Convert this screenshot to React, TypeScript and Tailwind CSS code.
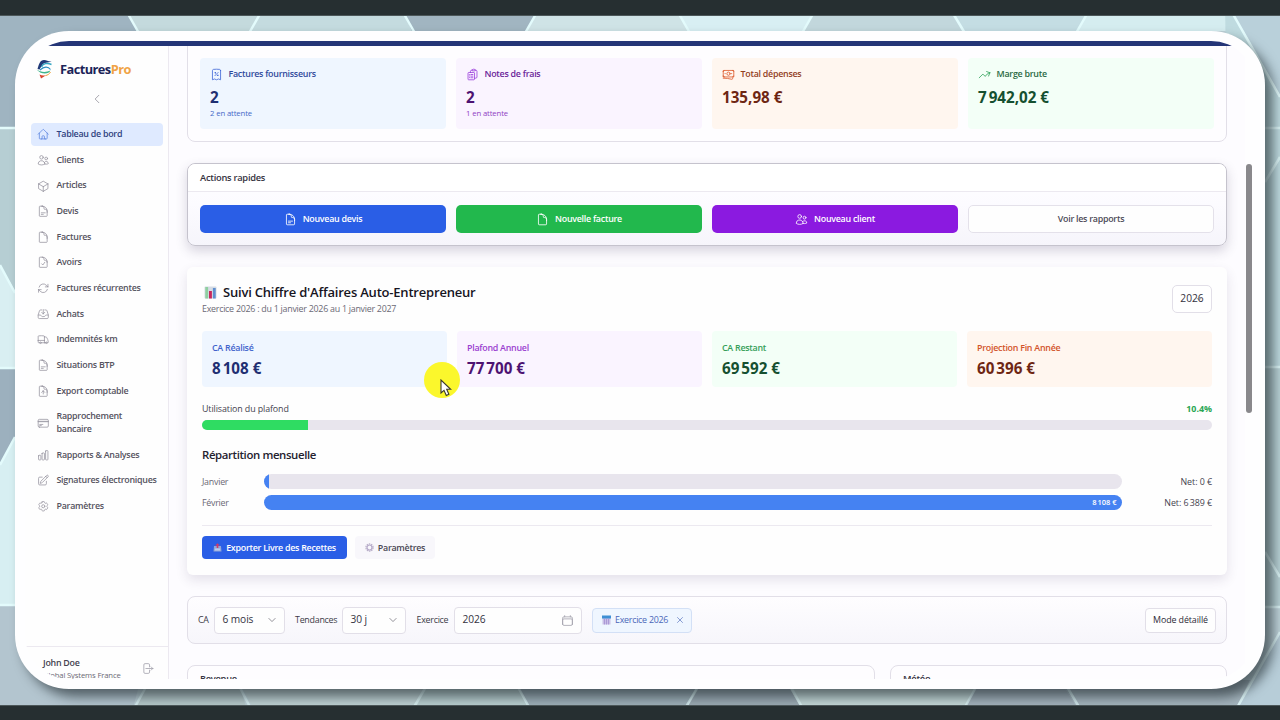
import type { ReactNode } from 'react';
import type { IconType } from 'react-icons';
import {
  HiOutlineArrowPath,
  HiOutlineArrowRightOnRectangle,
  HiOutlineArrowTrendingUp,
  HiOutlineBanknotes,
  HiOutlineCalendar,
  HiOutlineChartBar,
  HiOutlineChevronDown,
  HiOutlineChevronLeft,
  HiOutlineClipboardDocumentList,
  HiOutlineCog6Tooth,
  HiOutlineCreditCard,
  HiOutlineCube,
  HiOutlineDocument,
  HiOutlineDocumentArrowUp,
  HiOutlineDocumentCheck,
  HiOutlineDocumentText,
  HiOutlineHome,
  HiOutlineInboxArrowDown,
  HiOutlinePencilSquare,
  HiOutlineReceiptPercent,
  HiOutlineTruck,
  HiOutlineUsers,
  HiOutlineXMark,
} from 'react-icons/hi2';

const navItems: { label: string; icon: IconType; active?: boolean }[] = [
  { label: 'Tableau de bord', icon: HiOutlineHome, active: true },
  { label: 'Clients', icon: HiOutlineUsers },
  { label: 'Articles', icon: HiOutlineCube },
  { label: 'Devis', icon: HiOutlineDocumentText },
  { label: 'Factures', icon: HiOutlineDocument },
  { label: 'Avoirs', icon: HiOutlineDocumentCheck },
  { label: 'Factures récurrentes', icon: HiOutlineArrowPath },
  { label: 'Achats', icon: HiOutlineInboxArrowDown },
  { label: 'Indemnités km', icon: HiOutlineTruck },
  { label: 'Situations BTP', icon: HiOutlineDocumentText },
  { label: 'Export comptable', icon: HiOutlineDocumentArrowUp },
  { label: 'Rapprochement bancaire', icon: HiOutlineCreditCard },
  { label: 'Rapports & Analyses', icon: HiOutlineChartBar },
  { label: 'Signatures électroniques', icon: HiOutlinePencilSquare },
  { label: 'Paramètres', icon: HiOutlineCog6Tooth },
];

// Amounts use a narrow no-break space as thousands separator
const expenseTiles = [
  { label: 'Factures fournisseurs', value: '2', note: '2 en attente', icon: HiOutlineReceiptPercent, bg: 'bg-[#eff6ff]', iconColor: 'text-[#3f68d8]', title: 'text-[#2f4a9c]', number: 'text-[#1f2f72]', noteColor: 'text-[#4468c8]' },
  { label: 'Notes de frais', value: '2', note: '1 en attente', icon: HiOutlineClipboardDocumentList, bg: 'bg-[#faf4ff]', iconColor: 'text-[#9b3fdc]', title: 'text-[#6b2699]', number: 'text-[#4d1272]', noteColor: 'text-[#9042c4]' },
  { label: 'Total dépenses', value: '135,98 €', note: '', icon: HiOutlineBanknotes, bg: 'bg-[#fff6ef]', iconColor: 'text-[#dd5a2c]', title: 'text-[#93411f]', number: 'text-[#6e2613]', noteColor: '' },
  { label: 'Marge brute', value: '7\u202f942,02 €', note: '', icon: HiOutlineArrowTrendingUp, bg: 'bg-[#f3fff7]', iconColor: 'text-[#2fa35a]', title: 'text-[#2a6a44]', number: 'text-[#155030]', noteColor: '' },
];

const revenueTiles = [
  { label: 'CA Réalisé', value: '8\u202f108 €', bg: 'bg-[#eff6ff]', title: 'text-[#3f63cc]', number: 'text-[#1f2f72]' },
  { label: 'Plafond Annuel', value: '77\u202f700 €', bg: 'bg-[#faf4ff]', title: 'text-[#9a3fd0]', number: 'text-[#4d1272]' },
  { label: 'CA Restant', value: '69\u202f592 €', bg: 'bg-[#f3fff7]', title: 'text-[#35a05a]', number: 'text-[#155030]' },
  { label: 'Projection Fin Année', value: '60\u202f396 €', bg: 'bg-[#fff6ef]', title: 'text-[#d2542a]', number: 'text-[#6e2613]' },
];

function Backdrop() {
  return (
    <svg className="absolute inset-0" width="1280" height="720" viewBox="0 0 1280 720">
      <rect width="1280" height="720" fill="#bfd3da" />
      <path d="M0 0H120L138 31L60 128H0Z" fill="#9fb4c1" />
      <path d="M120 0L138 31H250L268 0Z" fill="#c4dadd" />
      <path d="M0 128H60V293H15L0 265Z" fill="#b6ced3" />
      <path d="M0 265L60 368H0Z" fill="#d9eff2" />
      <path d="M0 368H60V437H15L0 465Z" fill="#9cb0be" />
      <path d="M0 465L15 437H60V605H0Z" fill="#d7eff2" />
      <path d="M0 605H160L130 720H0Z" fill="#b3c5cf" />
      <path d="M268 0L250 31H412L398 0Z" fill="#c4dbdf" />
      <path d="M398 0L412 31H526L543 0Z" fill="#a1b5c1" />
      <path d="M543 0L526 31H689L672 0Z" fill="#cfe3e6" />
      <path d="M672 0L689 31H803L820 0Z" fill="#d8eff3" />
      <path d="M820 0L803 31H964L946 0Z" fill="#c2d7dc" />
      <path d="M946 0L964 31H1077L1094 0Z" fill="#c4dde3" />
      <path d="M1094 0L1077 31H1250L1225 0Z" fill="#d5edf0" />
      <path d="M1225 0L1280 97V0Z" fill="#b9d0da" />
      <path d="M1225 0L1280 97V368H1230Z" fill="#bfdbe0" />
      <path d="M1230 368H1280V607H1230Z" fill="#b9d2d6" />
      <path d="M1280 632L1230 720H1280Z" fill="#b7cdd8" />
      <path d="M147 680L130 720H250L238 680Z" fill="#b6c9cb" />
      <path d="M238 680L260 720H410L430 680Z" fill="#bfd2d4" />
      <path d="M410 720L430 680H515L535 720Z" fill="#b9cfd0" />
      <path d="M515 680L535 720H680L700 680Z" fill="#9eb0b9" />
      <path d="M680 720L702 680H785L808 720Z" fill="#9cabb4" />
      <path d="M785 680L808 720H958L980 680Z" fill="#c4d8d8" />
      <path d="M958 720L980 680H1060L1085 720Z" fill="#a3b2bc" />
      <path d="M1060 680L1085 720H1230L1250 680Z" fill="#a5b5be" />
      <g stroke="#e3fbfc" strokeWidth="2.5" fill="none">
        <path d="M120 0L140 35M268 0L248 35M396 0L416 35M544 0L524 35M671 0L691 35M821 0L801 35M945 0L966 35M1095 0L1075 35M1225 0L1280 97" />
        <path d="M0 128H15M0 265L15 293M0 368H15M15 437L0 465M0 605H15" />
        <path d="M1265 128H1280M1265 182L1280 157M1265 367H1280M1265 552L1280 577M1265 607H1280M1280 632L1230 720" strokeOpacity="0.8" />
        <path d="M147 685L135 707M236 680L250 707M430 680L414 707M514 680L529 707M702 680L686 707M787 680L802 707M980 680L965 707M1063 680L1079 707" strokeOpacity="0.7" />
      </g>
    </svg>
  );
}

function Logo() {
  return (
    <svg className="-ml-px" width="17" height="20" viewBox="0 0 17 20" fill="none">
      <path d="M1.500 10C3 5 4 1 8 1C11 1 12.500 2.800 15.500 2.300C12 4.500 8 2.800 6 6.500C5 8 4.300 9 3.500 10.500Z" fill="#223a78" />
      <path d="M5.500 8C7 4.500 11 3.500 15.500 5.500" stroke="#35a7c4" strokeWidth="1.400" />
      <path d="M4 11C8 7.500 12 7 14.500 10.500" stroke="#2b8fc0" strokeWidth="1.200" />
      <path d="M0.500 10.500C5 13.500 10 13.500 14.500 11.500C13 15 6 16.500 0.500 10.500Z" fill="#3fb58c" />
      <path d="M3.500 15.500C6 17 8.500 16.800 10.500 16L5 19.500Z" fill="#d8452e" />
      <path d="M14.500 13C13.500 15 11.500 16.200 9.500 16.600" stroke="#f0a23a" strokeWidth="1" />
    </svg>
  );
}

function ChartEmoji() {
  return (
    <svg width="13" height="13" viewBox="0 0 13 13">
      <rect x="0.500" y="0.500" width="12" height="12" rx="1" fill="#d5dbe4" />
      <rect x="1.300" y="1" width="2.800" height="11.500" fill="#8fd0a0" />
      <rect x="5" y="5" width="2.900" height="7.500" fill="#c8285c" />
      <rect x="8.900" y="2" width="2.800" height="10.500" fill="#5f8fcf" />
    </svg>
  );
}

function OutboxEmoji() {
  return (
    <svg width="9" height="9" viewBox="0 0 9 9">
      <path d="M1 3H8L8.500 8.500H0.500Z" fill="#8fa6d8" />
      <path d="M1.800 5.500H7.200V7.500H1.800Z" fill="#bccbf0" />
      <path d="M4.500 0.300L6.800 2.600H5.300V5H3.700V2.600H2.200Z" fill="#d13a68" />
    </svg>
  );
}

function GearEmoji() {
  return (
    <svg width="9" height="9" viewBox="0 0 9 9" fill="none">
      <circle cx="4.500" cy="4.500" r="3.600" stroke="#b9b0c8" strokeWidth="1.200" strokeDasharray="1.500 0.760" />
      <circle cx="4.500" cy="4.500" r="2.500" stroke="#b3a7c8" strokeWidth="1.200" />
    </svg>
  );
}

function CalendarEmoji() {
  return (
    <svg width="9" height="10" viewBox="0 0 9 10">
      <rect x="0.500" y="1" width="8" height="8.500" fill="#c9bfe6" />
      <rect x="0" y="0.500" width="9" height="3" fill="#3f8fd4" />
      <path d="M2.500 4V9.500M4.500 4V9.500M6.500 4V9.500" stroke="#9d88cf" strokeWidth="0.700" />
    </svg>
  );
}

function Sidebar() {
  return (
    <aside className="flex w-[144px] shrink-0 flex-col border-r border-[#ece9f0] bg-[#fefefe]">
      <div className="flex h-[33px] items-end gap-[7px] pl-3">
        <Logo />
        <span className="text-[12.800px] leading-[19px] font-bold tracking-[-0.55px] text-[#1c2458]">
          Factures<span className="text-[#f0a345]">Pro</span>
        </span>
      </div>
      <div className="flex h-[44px] items-center justify-center pb-1">
        <HiOutlineChevronLeft className="size-3 text-[#8d8b96]" />
      </div>
      <nav className="flex flex-col gap-[2.6px] pr-[5px] pl-1.5">
        {navItems.map(({ label, icon: Icon, active }) => (
          <a
            key={label}
            className={`flex items-center gap-[7.500px] rounded-[4px] py-[5.130px] pl-[5.500px] leading-[12.8px] font-semibold ${
              active ? 'bg-[#dfeaff] text-[#2f4280]' : 'text-[#55535f]'
            }`}
          >
            <Icon className={`size-[12.500px] shrink-0 ${active ? 'text-[#5f86e0]' : 'text-[#9896a2]'}`} />
            <span className={label === 'Rapprochement bancaire' ? 'w-20' : 'whitespace-nowrap'}>{label}</span>
          </a>
        ))}
      </nav>
      <div className="mt-auto flex h-[33px] items-center justify-between border-t border-[#ece9f0] pr-3.5 pl-[18px]">
        <div className="pt-3 leading-[12px]">
          <div className="font-semibold text-[#454350]">John Doe</div>
          <div className="text-[7.700px] font-medium tracking-[-0.15px] whitespace-nowrap text-[#6b6975]">Global Systems France</div>
        </div>
        <HiOutlineArrowRightOnRectangle className="mt-2.5 size-[13px] text-[#a3a1ac]" />
      </div>
    </aside>
  );
}

function Card({ className = '', children }: { className?: string; children: ReactNode }) {
  return <section className={`rounded-[8px] border border-[#e2dfe8] ${className}`}>{children}</section>;
}

function ExpenseCard() {
  return (
    <Card className="h-[107px] shrink-0 bg-[#fefdff] px-3 pt-[22px]">
      <div className="grid grid-cols-4 gap-[10px]">
        {expenseTiles.map(({ icon: Icon, ...tile }) => (
          <div key={tile.label} className={`h-[71px] rounded-[4px] px-[10px] pt-[10px] ${tile.bg}`}>
            <div className="flex h-3 items-center gap-[5.500px]">
              <Icon className={`size-[13px] ${tile.iconColor}`} />
              <span className={`leading-3 font-semibold ${tile.title}`}>{tile.label}</span>
            </div>
            <div className={`mt-[7.500px] text-[15.200px] leading-[18px] font-bold tracking-normal ${tile.number}`}>{tile.value}</div>
            <div className={`mt-[1.500px] text-[7.700px] leading-[12px] tracking-[-0.1px] ${tile.noteColor}`}>{tile.note}</div>
          </div>
        ))}
      </div>
    </Card>
  );
}

function QuickActions() {
  const base = 'flex h-[28px] items-center justify-center gap-1.5 rounded-[5px] font-semibold';
  return (
    <section className="mt-[21px] h-[83px] shrink-0 rounded-[8px] border border-[#c5c3cd] bg-gradient-to-b from-white via-[#fcfbff] to-[#f6f5fb] shadow-[0_5px_12px_rgba(60,50,90,0.2)]">
      <h2 className="h-7 rounded-t-[8px] border-b border-[#ece9f0] bg-white px-3 text-[9.300px] leading-[27px] font-semibold text-[#34323e]">
        Actions rapides
      </h2>
      <div className="grid grid-cols-4 gap-[10px] px-3 pt-[13px]">
        <button className={`${base} bg-[#2a5ee6] text-white`}>
          <HiOutlineDocumentText className="size-[13px]" /> Nouveau devis
        </button>
        <button className={`${base} bg-[#22b84d] text-white`}>
          <HiOutlineDocument className="size-[13px]" /> Nouvelle facture
        </button>
        <button className={`${base} bg-[#8b1ae0] text-white`}>
          <HiOutlineUsers className="size-[13px]" /> Nouveau client
        </button>
        <button className={`${base} border border-[#e4e1ea] bg-[#fefefe] text-[#4d4b58]`}>Voir les rapports</button>
      </div>
    </section>
  );
}

function RevenueTracking() {
  return (
    <section className="mt-[21px] h-[308px] shrink-0 rounded-[6px] bg-[#fefefe] px-[15px] pt-[17px] shadow-[0_5px_12px_rgba(60,50,90,0.13)]">
      <div className="flex items-start justify-between">
        <div>
          <h2 className="flex h-4 items-center gap-[6px] pl-0.5 text-[13px] leading-4 font-semibold tracking-[-0.2px] text-[#17151f]">
            <ChartEmoji /> Suivi Chiffre d'Affaires Auto-Entrepreneur
          </h2>
          <p className="mt-[3px] leading-[12px] text-[#6b6975]">Exercice 2026 : du 1 janvier 2026 au 1 janvier 2027</p>
        </div>
        <div className="relative mt-px flex h-7 w-10 items-center justify-center rounded-[5px] border border-[#e2dfe8] bg-white text-[10.200px] tracking-normal text-[#34323e]">
          2026
          <HiOutlineChevronDown className="absolute right-2 size-[8px]" />
        </div>
      </div>
      <div className="mt-[15.500px] grid grid-cols-4 gap-[10px]">
        {revenueTiles.map((tile) => (
          <div key={tile.label} className={`h-14 rounded-[4px] px-[10px] pt-[10.500px] ${tile.bg}`}>
            <div className={`leading-[13px] font-semibold ${tile.title}`}>{tile.label}</div>
            <div className={`mt-[4.500px] text-[15.200px] leading-[18px] font-bold tracking-normal ${tile.number}`}>{tile.value}</div>
          </div>
        ))}
      </div>
      <div className="mt-[15.500px] flex justify-between leading-[13px]">
        <span className="font-medium tracking-[-0.1px] text-[#45434f]">Utilisation du plafond</span>
        <span className="font-bold tracking-normal text-[#2aa653]">10.4%</span>
      </div>
      <div className="mt-[5px] h-[10px] overflow-hidden rounded-full bg-[#e8e5ed]">
        <div className="h-full w-[10.500%] bg-[#2fdc62]" />
      </div>
      <h3 className="mt-[16px] text-[11.400px] leading-[18px] font-semibold tracking-[-0.38px] text-[#24222e]">Répartition mensuelle</h3>
      <div className="mt-[10px] flex flex-col gap-[5.700px]">
        <MonthRow month="Janvier" net="0 €" width={0.6} />
        <MonthRow month="Février" net={'6\u202f389 €'} width={100} amount={'8\u202f108 €'} />
      </div>
      <div className="mt-[15px] flex gap-2 border-t border-[#ece9f0] pt-[10.500px]">
        <button className="flex h-[23px] w-[145px] items-center justify-center gap-1 rounded-[4px] bg-[#2a5ee6] font-semibold whitespace-nowrap text-white">
          <OutboxEmoji /> Exporter Livre des Recettes
        </button>
        <button className="flex h-[23px] w-20 items-center justify-center gap-1 rounded-[4px] bg-[#f8f7fb] font-semibold text-[#4a4855]">
          <GearEmoji /> Paramètres
        </button>
      </div>
    </section>
  );
}

function MonthRow({ month, net, width, amount }: { month: string; net: string; width: number; amount?: string }) {
  return (
    <div className="flex h-[15px] items-center">
      <span className="w-[61.500px] text-[#6b6975]">{month}</span>
      <div className="h-full w-[858px] overflow-hidden rounded-full bg-[#e8e5ed]">
        <div
          className="flex h-full items-center justify-end bg-[#4582f2] text-[7.500px] font-semibold tracking-[-0.1px] text-white"
          style={{ width: `${width}%` }}
        >
          {amount && <span className="pr-[5px]">{amount}</span>}
        </div>
      </div>
      <span className="ml-auto font-medium tracking-[-0.05px] text-[#45434f]">Net: {net}</span>
    </div>
  );
}

function Field({ width, value, icon }: { width: string; value: string; icon: ReactNode }) {
  return (
    <div className={`flex h-[27px] items-center justify-between rounded-[4px] border border-[#e2dfe8] bg-[#fefefe] px-[7.500px] text-[10.200px] tracking-[-0.1px] text-[#34323e] ${width}`}>
      {value}
      {icon}
    </div>
  );
}

function Filters() {
  return (
    <Card className="mt-[21px] flex h-[48px] shrink-0 items-center bg-gradient-to-b from-[#fefdff] to-[#f7f6fb] px-[10px] font-medium text-[#3d3b47]">
      <span className="w-[16px]">CA</span>
      <Field width="w-[71px]" value="6 mois" icon={<HiOutlineChevronDown className="size-[10px] text-[#55535f]" />} />
      <span className="ml-[10px] w-[47px]">Tendances</span>
      <Field width="w-[64px]" value="30 j" icon={<HiOutlineChevronDown className="size-[10px] text-[#55535f]" />} />
      <span className="ml-[10.500px] w-[37.500px]">Exercice</span>
      <Field width="w-[128px]" value="2026" icon={<HiOutlineCalendar className="size-[13px] text-[#a3a1ac]" />} />
      <div className="ml-[10px] flex h-[25px] w-[100px] items-center rounded-[4px] border border-[#d3e0f6] bg-[#eff6ff] pl-[9px] font-normal whitespace-nowrap text-[#4a66b8]">
        <CalendarEmoji />
        <span className="ml-1">Exercice 2026</span>
        <HiOutlineXMark className="mr-1.5 ml-auto size-[10px]" />
      </div>
      <button className="ml-auto h-[25px] w-[71px] rounded-[4px] border border-[#e2dfe8] bg-[#fefefe] tracking-[-0.1px] whitespace-nowrap text-[#2c2a36]">Mode détaillé</button>
    </Card>
  );
}

function Cursor() {
  return (
    <div className="absolute top-[362px] left-[424px] size-[36px] rounded-full bg-[#fbf72c]">
      <svg className="absolute top-[17px] left-[16px]" width="12" height="18" viewBox="0 0 12 18">
        <path d="M1 1V14L4 11.300L6.300 16.500L8.900 15.300L6.700 10.300H10.700Z" fill="#fff" stroke="#3a3a2c" strokeWidth="1.100" />
      </svg>
    </div>
  );
}

export default function App() {
  return (
    <div className="relative h-[720px] w-[1280px] overflow-hidden font-['Open_Sans','Noto_Sans',sans-serif] text-[8.900px] tracking-[-0.26px]">
      <Backdrop />
      <div className="relative flex h-full flex-col">
        <div className="h-4 shrink-0 border-b border-[#4c5759] bg-[#262f31]" />
        <div className="mx-[15px] mt-[15px] h-[658px] shrink-0 rounded-[54px] bg-[#fefeff] px-[10px] pt-[10px] pb-[10px] shadow-[8px_8px_12px_rgba(20,30,35,0.6)]">
          <div className="flex h-full flex-col overflow-hidden rounded-[44px]">
            <div className="h-[5px] shrink-0 bg-[#243577]" />
            <div className="flex h-[633px]">
              <Sidebar />
              <main className="flex w-[1076px] flex-col overflow-hidden bg-[#fdfcff] pr-[18px] pl-[18px]">
                <div className="-mt-[11px] flex flex-col">
                  <ExpenseCard />
                  <QuickActions />
                  <RevenueTracking />
                  <Filters />
                  <div className="mt-[21px] flex gap-[15px]">
                    <Card className="h-10 w-[688px] bg-[#fefdff] px-3 text-[9.300px] leading-[26px] font-semibold text-[#34323e]">Revenue</Card>
                    <Card className="h-10 flex-1 bg-[#fefdff] px-3 text-[9.300px] leading-[26px] font-semibold text-[#34323e]">Météo</Card>
                  </div>
                </div>
              </main>
              <div className="mt-[118px] ml-[1px] h-[249px] w-[6px] shrink-0 rounded-full bg-[#89888c]" />
            </div>
          </div>
        </div>
      </div>
      <div className="absolute top-[705px] left-0 h-[15px] w-full border-t border-[#4c5759] bg-[#262f31]" />
      <Cursor />
    </div>
  );
}
